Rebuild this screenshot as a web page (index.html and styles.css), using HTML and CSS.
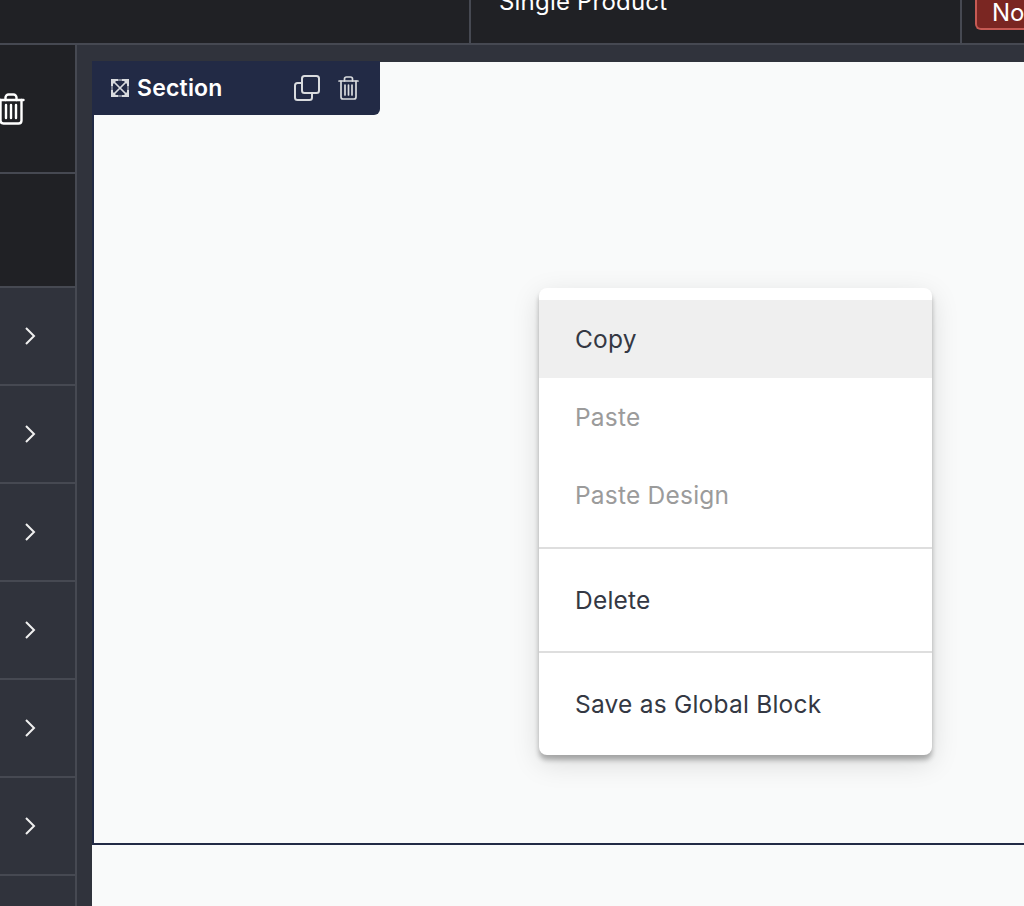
FILE: index.html
```html
<!DOCTYPE html>
<html lang="en">
<head>
  <meta charset="UTF-8">
  <meta name="viewport" content="width=device-width, initial-scale=1.0">
  <title>Section editor</title>
  <link rel="stylesheet" href="styles.css">
</head>
<body>
  <header class="topbar">
    <div class="topbar-cell topbar-first"></div>
    <div class="topbar-cell topbar-title"><span>Single Product</span></div>
    <div class="topbar-cell topbar-status"><span class="status-badge">No</span></div>
  </header>

  <div class="workspace">
    <aside class="sidebar">
      <div class="side-block side-trash">
        <svg class="side-trash-icon" viewBox="0 0 28 32" fill="none" stroke="#fff" stroke-width="2.4" stroke-linecap="round" stroke-linejoin="round">
          <path d="M1.5 7h25"/>
          <path d="M8.5 7V4.500C8.500 2.800 10 1.500 11.500 1.500h5c1.500 0 3 1.300 3 3V7"/>
          <path d="M3.500 7v20.500c0 1.700 1.300 3 3 3h15c1.700 0 3-1.300 3-3V7"/>
          <path d="M9 12v13M14 12v13M19 12v13"/>
        </svg>
      </div>
      <div class="side-block side-empty"></div>
      <div class="side-row"><svg class="chevron" viewBox="0 0 12 20"><path d="M2 2l8 8-8 8"/></svg></div>
      <div class="side-row"><svg class="chevron" viewBox="0 0 12 20"><path d="M2 2l8 8-8 8"/></svg></div>
      <div class="side-row"><svg class="chevron" viewBox="0 0 12 20"><path d="M2 2l8 8-8 8"/></svg></div>
      <div class="side-row"><svg class="chevron" viewBox="0 0 12 20"><path d="M2 2l8 8-8 8"/></svg></div>
      <div class="side-row"><svg class="chevron" viewBox="0 0 12 20"><path d="M2 2l8 8-8 8"/></svg></div>
      <div class="side-row"><svg class="chevron" viewBox="0 0 12 20"><path d="M2 2l8 8-8 8"/></svg></div>
      <div class="side-row side-row-last"></div>
    </aside>

    <main class="canvas">
      <section class="frame">
        <div class="section-tab">
          <svg class="tab-expand" viewBox="0 0 18 18" fill="none" stroke="#d9dbde">
            <path d="M7 1h4M7 17h4M1 7v4M17 7v4" stroke-width="1"/>
            <path d="M3 3l12 12M15 3L3 15" stroke-width="1.700"/>
            <path d="M1 7V1h6M11 1h6v6M17 11v6h-6M7 17H1v-6" stroke-width="2"/>
            <path d="M1 1h5L1 6zM17 1h-5l5 5zM17 17h-5l5-5zM1 17h5l-5-5z" fill="#d9dbde" stroke="none"/>
          </svg>
          <span class="tab-label">Section</span>
          <svg class="tab-copy" viewBox="0 0 26 26" fill="none" stroke="#d9dbde" stroke-width="2">
            <rect x="8" y="1" width="17" height="17" rx="2.500"/>
            <path d="M8 8H3.500C2 8 1 9 1 10.500v12C1 24 2 25 3.500 25h12c1.500 0 2.500-1 2.500-2.500V18"/>
          </svg>
          <svg class="tab-trash" viewBox="0 0 21 24" fill="none" stroke="#d9dbde" stroke-width="1.700" stroke-linecap="round" stroke-linejoin="round">
            <path d="M1 5h19"/>
            <path d="M6.500 5V3c0-1.100.9-2 2-2h4c1.100 0 2 .9 2 2v2"/>
            <path d="M3 5v16c0 1.100.9 2 2 2h11c1.100 0 2-.9 2-2V5"/>
            <path d="M7 9v10M10.500 9v10M14 9v10"/>
          </svg>
        </div>

        <ul class="context-menu">
          <li class="menu-item menu-item-active">Copy</li>
          <li class="menu-item menu-item-disabled">Paste</li>
          <li class="menu-item menu-item-disabled">Paste Design</li>
          <li class="menu-divider menu-divider-first"></li>
          <li class="menu-item">Delete</li>
          <li class="menu-divider"></li>
          <li class="menu-item">Save as Global Block</li>
        </ul>
      </section>
      <section class="frame-next"></section>
    </main>
  </div>
</body>
</html>
```

FILE: styles.css
```css
html, body {
  height: 100%;
}
body {
  font-family: Inter, "Liberation Sans", sans-serif;
  background-color: #30333c;
  margin: 0;
  padding: 0;
  display: flex;
  flex-direction: column;
  overflow: hidden;
}

/* top bar, cut off by the top of the window */
.topbar {
  display: flex;
  flex-shrink: 0;
  height: 43px;
  background-color: #202125;
  border-bottom: 2px solid #464952;
  overflow: hidden;
}
.topbar-cell {
  display: flex;
  align-items: flex-end;
  border-right: 2px solid #464952;
}
.topbar-first {
  width: 469px;
}
.topbar-title {
  width: 461px;
  padding-left: 28px;
  padding-bottom: 27px;
  color: #fff;
  font-size: 24px;
  letter-spacing: 0.2px;
  line-height: 28px;
  white-space: nowrap;
}
.topbar-status {
  border-right: none;
  flex-grow: 1;
  padding-left: 13px;
  padding-bottom: 13px;
}
.status-badge {
  display: block;
  width: 49px;
  box-sizing: border-box;
  padding: 0 0 0 15px;
  background-color: #7a2622;
  border: 2px solid #c65a54;
  border-right: none;
  border-radius: 0 0 0 6px;
  color: #fff;
  font-size: 24px;
  line-height: 30px;
  white-space: nowrap;
  overflow: hidden;
}

.workspace {
  display: flex;
  flex-grow: 1;
  min-height: 0;
}

/* left panel */
.sidebar {
  width: 75px;
  flex-shrink: 0;
  display: flex;
  flex-direction: column;
  border-right: 2px solid #464952;
  overflow: hidden;
}
.side-block {
  flex-shrink: 0;
  background-color: #202125;
  border-bottom: 2px solid #464952;
  box-sizing: border-box;
}
.side-trash {
  height: 129px;
  padding-top: 48px;
}
.side-trash-icon {
  display: block;
  width: 28px;
  height: 32px;
  margin-left: -3px;
}
.side-empty {
  height: 114px;
}
.side-row {
  height: 98px;
  flex-shrink: 0;
  box-sizing: border-box;
  background-color: #30333c;
  border-bottom: 2px solid #464952;
  display: flex;
  align-items: center;
  padding-left: 24px;
}
.side-row-last {
  border-bottom: none;
}
.chevron {
  width: 12px;
  height: 20px;
  fill: none;
  stroke: #f0f0f0;
  stroke-width: 2;
}

/* canvas */
.canvas {
  flex-grow: 1;
  min-width: 0;
  padding: 17px 0 0 15px;
  display: flex;
  flex-direction: column;
}
.frame {
  position: relative;
  height: 781px;
  flex-shrink: 0;
  background-color: #f9fafa;
  border-left: 2px solid #222a45;
  border-bottom: 2px solid #222a45;
}
.frame-next {
  flex-grow: 1;
  background-color: #f9fafa;
}

/* block toolbar on the top left of the frame */
.section-tab {
  position: absolute;
  top: -1px;
  left: -2px;
  width: 288px;
  height: 54px;
  box-sizing: border-box;
  padding-left: 19px;
  display: flex;
  align-items: center;
  background-color: #222a45;
  border-radius: 0 0 6px 0;
  color: #fff;
}
.tab-expand {
  width: 18px;
  height: 18px;
  flex-shrink: 0;
}
.tab-label {
  margin-left: 8px;
  font-size: 23px;
  font-weight: 600;
  letter-spacing: 0.2px;
  width: 157px;
}
.tab-copy {
  width: 26px;
  height: 26px;
  flex-shrink: 0;
}
.tab-trash {
  width: 21px;
  height: 24px;
  flex-shrink: 0;
  margin-left: 18px;
}

/* right click menu */
.context-menu {
  position: absolute;
  top: 226px;
  left: 445px;
  width: 393px;
  box-sizing: border-box;
  margin: 0;
  padding: 12px 0;
  list-style: none;
  background-color: #fff;
  border-radius: 8px;
  box-shadow: 0 5px 5px rgba(0, 0, 0, 0.28), 0 8px 28px rgba(0, 0, 0, 0.13);
}
.menu-item {
  height: 78px;
  padding-left: 36px;
  display: flex;
  align-items: center;
  font-size: 24.5px;
  letter-spacing: 0.22px;
  color: #343843;
}
.menu-item-active {
  background-color: #efefef;
}
.menu-item-disabled {
  color: #9b9b9b;
}
.menu-divider {
  height: 2px;
  margin: 12px 0;
  background-color: #dedede;
}
.menu-divider-first {
  margin-top: 13px;
}
```
